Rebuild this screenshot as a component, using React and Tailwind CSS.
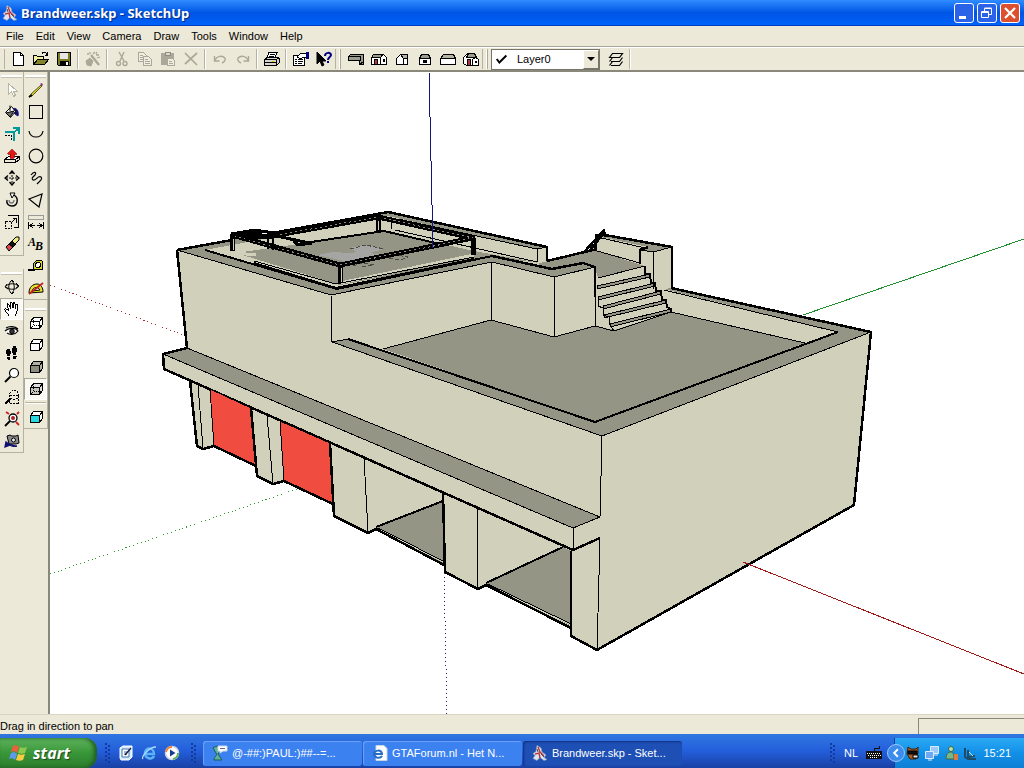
// src/App.jsx
const Ico = ({ children, className = 'w-4 h-4', smooth }) => (
  <svg
    viewBox="0 0 16 16"
    className={`shrink-0 ${className}`}
    fill="none"
    stroke="#000"
    shapeRendering={smooth ? 'auto' : 'crispEdges'}
    aria-hidden="true"
  >
    {children}
  </svg>
)

const SketchUpLogo = () => (
  <Ico smooth>
    <path d="M5 0.5l4 2.5 1 4 4 3-2 2.5 3 2-3 1-4-3-3 3-4-2 2-3-2-2 3-2z" fill="#dfe5ef" stroke="#8d9bb8" strokeWidth="0.7" />
    <path d="M6 2l2 5 4 4M3 9l4-1 1 5" stroke="#b5363b" strokeWidth="1.4" />
    <path d="M5 4l1 3M9 9l3 3" stroke="#44506e" />
  </Ico>
)

/* ---------- standard toolbar icons ---------- */
const NewIcon = () => (
  <Ico><path d="M3.5 1.5h7l3 3v10h-10z" fill="#fff" /><path d="M10.5 1.5v3h3" /></Ico>
)
const OpenIcon = () => (
  <Ico>
    <path d="M0.5 13.5v-9h3l1 1h6v3" fill="#f2f0a0" />
    <path d="M0.5 13.5l4-5h11l-4 5z" fill="#84842a" />
    <path d="M9 2.5c2-2 4-1 5 1M14.5 1v3h-3" />
  </Ico>
)
const SaveIcon = () => (
  <Ico>
    <path d="M1.5 1.5h13v13h-12l-1-1z" fill="#7d7d20" />
    <path d="M4 2h8v6H4z" fill="#e6e6e6" stroke="none" />
    <path d="M4 10h9v4H4z" fill="#000" stroke="none" />
    <path d="M10 11h2v3h-2z" fill="#fff" stroke="none" />
  </Ico>
)
const MagicIcon = () => (
  <Ico smooth>
    <g stroke="#aca899">
      <path d="M1 10l4-3 3 3-2 5-4-1z" fill="#aca899" />
      <path d="M6 4l8 10" strokeWidth="2.4" />
      <path d="M8 3l2-2M11 4h3M12 7l3-1M5 1v2M2 3h2M12 1l-1 2" strokeWidth="1.3" />
    </g>
  </Ico>
)
const CutIcon = () => (
  <Ico smooth>
    <g stroke="#aca899" strokeWidth="1.4">
      <path d="M5 1l5 9M10 1L6 10" />
      <circle cx="4.5" cy="12.5" r="2" />
      <circle cx="11" cy="12.5" r="2" />
    </g>
  </Ico>
)
const CopyIcon = () => (
  <Ico>
    <g stroke="#aca899" fill="#efece0">
      <path d="M1.5 1.5h5l3 3v6h-8z" /><path d="M3 4.5h3M3 6.5h4M3 8.5h4" />
      <path d="M6.5 5.5h5l3 3v6h-8z" /><path d="M8 8.5h3M8 10.5h5M8 12.5h5" />
    </g>
  </Ico>
)
const PasteIcon = () => (
  <Ico>
    <path d="M1.5 2.5h12v11h-12z" fill="#aca899" stroke="#aca899" />
    <path d="M5 1.5h5v3H5z" fill="#dcd8c8" stroke="#8f8c80" />
    <path d="M7.5 7.5h5l2 2v5h-7z" fill="#efece0" stroke="#aca899" />
    <path d="M9 10.5h3M9 12.5h4" stroke="#aca899" />
  </Ico>
)
const DeleteIcon = () => <Ico smooth><path d="M2 2l12 12M14 2L2 13" stroke="#aca899" strokeWidth="1.7" /></Ico>
const UndoIcon = () => (
  <Ico smooth><path d="M2.5 5v5h5M3 9c2-4 7-5 10-2 1 3-1 4-3 5" stroke="#aca899" strokeWidth="1.4" /></Ico>
)
const RedoIcon = () => (
  <Ico smooth><path d="M13.5 5v5h-5M13 9c-2-4-7-5-10-2-1 3 1 4 3 5" stroke="#aca899" strokeWidth="1.4" /></Ico>
)
const PrintIcon = () => (
  <Ico>
    <path d="M5 1.5h8l-2 5H3z" fill="#fff" /><path d="M6 3.5h5M5 5.5h5" />
    <path d="M0.5 8.5l3-2h10l2 1v4l-3 3h-12z" fill="#d8d6cc" />
    <path d="M0.5 8.5h12l3-2M12.5 8.5v6M1 11.5h11" />
    <path d="M8 10h2" stroke="#e0c800" />
  </Ico>
)
const PropsIcon = () => (
  <Ico>
    <path d="M0.5 4.5h11v10h-11z" fill="#fff" />
    <path d="M2 8.5h2M5 8.5h5M2 10.5h2M5 10.5h5M2 12.5h2M5 12.5h4" />
    <path d="M4 6l4-4 5 1v4l-3-1-2 2-2-1z" fill="#fff" /><path d="M13 1h2.5v6H13z" fill="#000080" stroke="#000080" />
  </Ico>
)
const HelpIcon = () => (
  <Ico smooth>
    <path d="M1 1v12l3-3 2 5 2-1-2-4h4z" fill="#000" />
    <path d="M9 5c0-4 6-4 6-1 0 2-3 2-3 5M12 10v2" stroke="#000080" strokeWidth="2" />
  </Ico>
)

/* ---------- view icons ---------- */
const IsoIcon = () => (
  <Ico>
    <path d="M0.5 5.5l2-2h13v10h-4v-4h-11z" fill="#9c9c8c" />
    <path d="M0.5 5.5h12v4M11.5 13.5l4-3" />
  </Ico>
)
const TopIcon = () => (
  <Ico>
    <path d="M0.5 6.5l2-3h10l3 3v7h-15z" fill="#fff" />
    <path d="M0.5 6.5l2-3h9l-2 3z" fill="#9c9c8c" />
    <path d="M9.5 13.5v-7l3-3 3 3v7" />
    <path d="M3.5 8.5h3v5h-3z" fill="#b5363b" /><path d="M12 8h2v3h-2z" fill="#000" stroke="none" />
  </Ico>
)
const FrontIcon = () => (
  <Ico>
    <path d="M2.5 13.5v-6l4-4h7v10z" fill="#fff" /><path d="M6.5 3.5l3 4h4v-4z" fill="#b4b4a4" /><path d="M9.5 7.5v6" />
  </Ico>
)
const RightIcon = () => (
  <Ico>
    <path d="M2.5 7.5l2-4h7l2 4z" fill="#9c9c8c" /><path d="M2.5 7.5h11v6h-11z" fill="#fff" />
    <path d="M6 9h4v3H6z" fill="#000" stroke="none" />
  </Ico>
)
const BackIcon = () => (
  <Ico>
    <path d="M0.5 7.5l3-4h10l2 4z" fill="#b4b4a4" /><path d="M0.5 7.5h15v6h-15z" fill="#fff" />
  </Ico>
)
const LeftIcon = () => (
  <Ico>
    <path d="M0.5 12.5v-6l4-4h7l3 5v7h-11z" fill="#fff" /><path d="M3.5 6.5l2-4h6l2 4z" fill="#9c9c8c" />
    <path d="M4.5 8.5h3v6h-3z" fill="#b5363b" /><path d="M9.5 14.5v-6l3-2 3 2v6z" fill="#fff" />
    <path d="M12 10h2v2h-2z" fill="#000" stroke="none" />
  </Ico>
)
const LayersIcon = () => (
  <Ico smooth>
    <path d="M1.5 6.5l3-4h10l-3 4zM3 10.5h8.5l3-4M1.500 10.500l3-4M3 14.500h8.500l3-4M1.500 14.500l3-4" strokeWidth="1.2" />
  </Ico>
)

/* ---------- drawing tool icons ---------- */
const SelectIcon = () => (
  <Ico><path d="M4.5 1.5v11l3-3 2 5 2-1-2-4h4z" fill="#fff" stroke="#b8b5a5" /></Ico>
)
const PaintIcon = () => (
  <Ico smooth>
    <path d="M8 5c4-2 7 1 6 7l-3-2z" fill="#101070" stroke="#101070" />
    <path d="M1.5 8.5l6-6 4 5-5 6z" fill="#fff" /><path d="M2 9l8-2-4 6z" fill="#707070" /><path d="M6 7V1.5" />
  </Ico>
)
const PushIcon = () => (
  <Ico>
    <path d="M9 2h6v6M14 3l-5 4M1 6h8M10 7v8" stroke="#009a9a" strokeWidth="2" />
    <path d="M1 9.5h6M7.5 9v6" strokeDasharray="2 1" />
  </Ico>
)
const PullIcon = () => (
  <Ico>
    <path d="M0.5 11.5l4-3h11l-4 3z" fill="#fff" /><path d="M0.5 11.5v3h11l4-3V8.5M11.5 11.5v3" />
    <path d="M8 1l4.5 5H10v4H6V6H3.5z" fill="#e01818" stroke="#900" strokeWidth="0.7" />
  </Ico>
)
const MoveIcon = () => (
  <Ico smooth>
    <path d="M8 2v12M2 8h12" strokeDasharray="2 1" />
    <path d="M5.5 4L8 1l2.5 3M5.5 12L8 15l2.5-3M4 5.5L1 8l3 2.5M12 5.5L15 8l-3 2.5" strokeWidth="1.4" />
  </Ico>
)
const RotateIcon = () => (
  <Ico smooth>
    <path d="M3 8c-1 4 2 6 5 6 6 0 7-8 2-11" strokeWidth="1.4" />
    <path d="M5 8c0 4 5 4 5 0" stroke="#777" strokeWidth="1.3" /><path d="M11 1H6l2 5z" fill="#fff" />
  </Ico>
)
const ScaleIcon = () => (
  <Ico>
    <path d="M4 1.5h10.5v12H10" /><path d="M1.5 7.5h6v7h-6z" strokeDasharray="2 1" />
    <path d="M7 9l5-5M8.5 4.5H12v4" />
  </Ico>
)
const EraserIcon = () => (
  <Ico smooth>
    <path d="M2 11l3-3 4 3-4 4z" fill="#d84848" /><path d="M5 8l3-3 4 3-3 3z" fill="#111" />
    <path d="M8 5l4-4h3v3l-4 4z" fill="#f0e880" />
  </Ico>
)
const PencilIcon = () => (
  <Ico smooth>
    <path d="M1 15l2-3 10-9 1 1-10 10z" fill="#d6cf30" stroke="#4c4810" strokeWidth="0.9" />
    <path d="M12 2l2-1 1 2-1 1z" fill="#8d2d8d" stroke="none" /><path d="M1 15l3-2" strokeWidth="1.6" />
  </Ico>
)
const RectIcon = () => <Ico><path d="M1.5 1.5h13v13h-13z" /></Ico>
const ArcIcon = () => <Ico smooth><path d="M1 5c1 8 13 8 14 0" strokeWidth="1.2" /></Ico>
const CircleIcon = () => <Ico smooth><circle cx="8" cy="8" r="6.8" strokeWidth="1.2" /></Ico>
const FreehandIcon = () => (
  <Ico smooth><path d="M3 5c3-4 6-3 4 0-2 2-4 3-2 5 3 1 5-5 8-3 2 2-1 4-4 7" strokeWidth="1.2" /></Ico>
)
const PolygonIcon = () => <Ico smooth><path d="M1 7l13-5-3 13z" strokeWidth="1.2" /></Ico>
const DimensionIcon = () => (
  <Ico>
    <path d="M0.5 1.5h15v4h-15z" stroke="#999" />
    <path d="M0.5 8v7M15.5 8v7M2 11.5h5M9 11.5h5M5 9l-3 2.5L5 14M11 9l3 2.5-3 2.5" />
  </Ico>
)
const TextIcon = () => (
  <span className="flex font-['Liberation_Serif',serif] italic font-bold text-xs leading-4">
    <span className="pb-1">A</span>
    <span className="pt-1 -ml-px">B</span>
  </span>
)
const TapeIcon = () => (
  <Ico>
    <path d="M5.5 11.5v-6l3-3h5l1 1v8z" fill="#d9d22c" /><circle cx="10" cy="7" r="2.5" fill="#fff" />
    <path d="M0 12h7" strokeWidth="2" />
  </Ico>
)
const ProtractorIcon = () => (
  <Ico smooth>
    <path d="M1 13c0-6 4-9 8-9 4 0 6 4 6 8z" fill="#e8e02c" /><path d="M4 11c1-4 6-5 8-1z" fill="#fff" />
    <path d="M1 14L15 3" stroke="#c02020" strokeWidth="1.8" />
  </Ico>
)

/* ---------- camera icons ---------- */
const OrbitIcon = () => (
  <Ico smooth>
    <path d="M8 2c3 3 3 9 0 12M7 2c-3 3-3 9 0 12M2 7c3-3 10-3 12 0 1 3-8 5-12 1" />
    <path d="M6 3l2-2 2 2M6 13l2 2 2-2M3 5L1 8l3 2M12 4l3 3-3 2" />
  </Ico>
)
const PanIcon = () => (
  <Ico>
    <path d="M5 15c-1-3-5-5-4-7 1-1 3 1 4 2L3 4c0-2 2-1 2 0l2 4-1-6c1-2 2 0 2 0l1 5V2c1-1 2 0 2 1v5l1-4c1-1 2 0 2 1-1 5-1 7-3 10" fill="#fff" />
  </Ico>
)
const LookIcon = () => (
  <Ico smooth>
    <path d="M2 5c3-2 9-2 12 1M1 8c3-3 10-4 13 0-3 4-8 4-11 2" fill="#fff" strokeWidth="1.2" />
    <circle cx="8" cy="8.5" r="2.3" fill="#333" />
  </Ico>
)
const WalkIcon = () => (
  <Ico>
    <path d="M9 1h3l1 3-1 6H9L8 5zM9 11h4l-1 3h-3zM3 4h3l1 3-1 4H3L2 7zM3 12h3v3H4z" fill="#000" stroke="none" />
  </Ico>
)
const ZoomIcon = () => (
  <Ico smooth><circle cx="10" cy="6" r="4.5" fill="#fff" strokeWidth="1.2" /><path d="M6.5 9.5L1 15" strokeWidth="2" /></Ico>
)
const ZoomWindowIcon = () => (
  <Ico>
    <path d="M5.5 6.5h9v8h-9z" strokeDasharray="2 1" /><circle cx="10" cy="6" r="4.5" strokeDasharray="2 1" />
    <path d="M6 10l-5 5" strokeWidth="2" />
  </Ico>
)
const ZoomExtentsIcon = () => (
  <Ico smooth>
    <circle cx="9" cy="7" r="4" fill="#fff" strokeWidth="1.3" /><circle cx="9" cy="7" r="2" fill="#b02020" stroke="none" />
    <path d="M6 10l-5 5" strokeWidth="1.8" />
    <path d="M2 1l3 2M15 1l-2 2M15 14l-3-3" stroke="#d02020" strokeWidth="1.8" />
  </Ico>
)
const PreviousIcon = () => (
  <Ico smooth>
    <path d="M3 3l3-1 2 1h4l2-1 1 8-3 1H5z" fill="#888" /><circle cx="9.5" cy="7" r="2" fill="#eee" />
    <path d="M13 13c-4 1-7 0-9-3M1 14l1-5 4 3z" fill="#101070" stroke="#101070" strokeWidth="1.3" />
  </Ico>
)

/* ---------- face styles ---------- */
const Box = ({ top = '#fff', front = '#fff', dash }) => (
  <Ico>
    <path d="M2.5 6.5l3-4h9l-3 4z" fill={top} />
    <path d="M11.5 6.5l3-4v7l-3 4z" fill={top} />
    <path d="M2.5 6.5h9v7h-9z" fill={front} />
    {dash && <path d="M5.5 3v7M5.5 10.5h8M5 11l-2 2" strokeDasharray="1 1" />}
  </Ico>
)

/* ---------- small pieces ---------- */
const ToolButton = ({ label, icon: Icon, active, disabled }) => (
  <button
    aria-label={label}
    disabled={disabled}
    className={`flex items-center justify-center w-[23px] h-[22px] shrink-0 ${
      active ? 'bg-[#f9f8f3] border border-t-[#aca899] border-l-[#aca899] border-b-white border-r-white' : ''
    }`}
  >
    <Icon />
  </button>
)

const Separator = () => (
  <div className="w-[6px] h-5 flex justify-center shrink-0">
    <div className="w-[2px] bg-[#b5b2a2] border-r border-white" />
  </div>
)

const Grip = () => (
  <div className="w-[9px] h-5 flex justify-between pr-[3px] shrink-0">
    <div className="w-px bg-[#b5b2a2]" />
    <div className="w-[2px] bg-white border-r border-[#aca899]" />
  </div>
)

const ToolColumn = ({ groups }) => (
  <div className="w-6 border-r border-[#b5b2a2] bg-[#ece9d8] flex flex-col gap-[5px]">
    {groups.map((group) => (
      <div key={group.name} role="toolbar" aria-label={group.name} className="border-b border-[#b5b2a2]">
        <div className="h-[7px] pt-[3px] px-px">
          <div className="h-[3px] bg-white border-b border-[#c5c2b2]" />
        </div>
        {group.tools.map((tool) => (
          <div key={tool.label}>
            {tool.split && <div className="h-[2px] my-[2px] mx-px bg-[#b5b2a2] border-b border-white" />}
            <ToolButton {...tool} />
          </div>
        ))}
      </div>
    ))}
  </div>
)

const menus = ['File', 'Edit', 'View', 'Camera', 'Draw', 'Tools', 'Window', 'Help']

const standardTools = [
  [
    { label: 'New', icon: NewIcon },
    { label: 'Open', icon: OpenIcon },
    { label: 'Save', icon: SaveIcon },
  ],
  [{ label: 'Make component', icon: MagicIcon, disabled: true }],
  [
    { label: 'Cut', icon: CutIcon, disabled: true },
    { label: 'Copy', icon: CopyIcon, disabled: true },
    { label: 'Paste', icon: PasteIcon, disabled: true },
    { label: 'Delete', icon: DeleteIcon, disabled: true },
  ],
  [
    { label: 'Undo', icon: UndoIcon, disabled: true },
    { label: 'Redo', icon: RedoIcon, disabled: true },
  ],
  [{ label: 'Print', icon: PrintIcon }],
  [
    { label: 'Properties', icon: PropsIcon },
    { label: 'Context help', icon: HelpIcon },
  ],
]

const viewTools = [
  { label: 'Iso', icon: IsoIcon },
  { label: 'Top', icon: TopIcon },
  { label: 'Front', icon: FrontIcon },
  { label: 'Right', icon: RightIcon },
  { label: 'Back', icon: BackIcon },
  { label: 'Left', icon: LeftIcon },
]

const editTools = [
  { label: 'Select', icon: SelectIcon, disabled: true },
  { label: 'Paint bucket', icon: PaintIcon },
  { label: 'Offset', icon: PushIcon },
  { label: 'Push/Pull', icon: PullIcon },
  { label: 'Move', icon: MoveIcon },
  { label: 'Rotate', icon: RotateIcon },
  { label: 'Scale', icon: ScaleIcon },
  { label: 'Eraser', icon: EraserIcon },
]

const cameraTools = [
  { label: 'Orbit', icon: OrbitIcon },
  { label: 'Pan', icon: PanIcon, active: true },
  { label: 'Look around', icon: LookIcon },
  { label: 'Walk', icon: WalkIcon },
  { label: 'Zoom', icon: ZoomIcon },
  { label: 'Zoom window', icon: ZoomWindowIcon },
  { label: 'Zoom extents', icon: ZoomExtentsIcon },
  { label: 'Previous view', icon: PreviousIcon },
]

const drawTools = [
  { label: 'Line', icon: PencilIcon },
  { label: 'Rectangle', icon: RectIcon },
  { label: 'Arc', icon: ArcIcon },
  { label: 'Circle', icon: CircleIcon },
  { label: 'Freehand', icon: FreehandIcon },
  { label: 'Polygon', icon: PolygonIcon },
  { label: 'Dimension', icon: DimensionIcon },
  { label: 'Text', icon: TextIcon },
  { label: 'Tape measure', icon: TapeIcon },
  { label: 'Protractor', icon: ProtractorIcon },
]

const styleTools = [
  { label: 'Wireframe', icon: () => <Box dash /> },
  { label: 'Hidden line', icon: () => <Box /> },
  { label: 'Shaded', icon: () => <Box top="#b0b0a4" front="#8c8c80" /> },
  { label: 'Shaded with textures', icon: () => <Box top="#ddd" front="#c4c4bc" dash />, active: true },
  { label: 'X-ray', icon: () => <Box top="#fff" front="#28d8e0" />, split: true },
]

/* ---------- model ---------- */
const LIGHT = '#d1d1bb'
const DARK = '#959585'

const STEPS = [
  [597, 286, 650, 274],
  [598, 297, 655, 283],
  [603, 306, 661, 291],
  [604, 315, 666, 300],
  [610, 324, 671, 309],
]

const Model = () => (
  <svg
    viewBox="50 72 974 642"
    className="block w-full h-full"
    fill="none"
    stroke="#000"
    strokeWidth="1"
    strokeLinejoin="round"
    shapeRendering="crispEdges"
    role="img"
    aria-label="3D model of the fire station"
  >
    {/* axes behind the model */}
    <path d="M50 285L186 336" stroke="#a03030" strokeDasharray="1 3" />
    <path d="M50 574L297 489" stroke="#309a30" strokeDasharray="1 3" />
    <path d="M444 573L447 714" stroke="#202070" strokeDasharray="1 3" />
    <path d="M803 315L1024 239" stroke="#1f8f2f" />

    {/* overall body */}
    <path
      d="M177 250L388 212L547 247V261L595 248V235L672 247L671 288L871 332L854 505L597 650L571 636V628L486 585L478 589L445 572L444 565L376 529L368 533L334 516L333 504L284 481L273 484L257 476L256 466L214 446L203 449L197 446L190 381L164 369L162 354L187 348Z"
      fill={LIGHT}
      stroke="none"
    />

    {/* rear roof */}
    <path d="M177 250L388 212L547 247L537 249L388 216L205 250L337 289L492 256L552 269L583 263L595 267L554 277L492 262L331 295Z" fill={DARK} stroke="none" />
    <path d="M236 253L298 244L384 231L474 251L540 263L492 257L340 285Z" fill={DARK} stroke="none" />
    <path d="M318 255L332 252L350 253L357 252L349 248L366 245L384 249L370 253L385 256L348 262Z" fill="#a5a5a3" stroke="none" />
    <path d="M350 249L366 245L384 249M388 258L396 255L408 257L400 260L388 258M353 266L362 263L374 265L362 267" stroke="#4a4a42" strokeDasharray="4 2" />
    <path d="M391 217V229M395 230L537 262M537 249V262M398 219L537 249L547 247" />
    <path d="M205 250L337 289L492 256" strokeWidth="2" />
    <path d="M177 250L232 240M272 233L388 212L547 247V261" strokeWidth="2.5" />
    <path d="M298 244L384 231L440 244" strokeWidth="2" />
    <path d="M236 253L256 255M340 283L474 255" stroke={LIGHT} strokeWidth="3" />
    <path d="M256 262L336 285" stroke={LIGHT} strokeWidth="2" />
    <path d="M254 261L336 284L474 257" />
    <path d="M254 263L336 288L474 259" strokeWidth="2" />

    {/* roof railing */}
    <path d="M232 235L340 265L473 238L378 217L272 236L232 236" strokeWidth="5" />
    <path d="M234 236L340 265L473 238L378 217L272 236" stroke="#8c8c7e" strokeDasharray="2 3" />
    <path d="M231 234L255 230L274 233L270 238M240 235L262 232M276 236L310 243M294 241L298 245L312 243" strokeWidth="3" />
    <path d="M232 234V251M340 265V283M378 217V231M473 238V255" strokeWidth="5" />
    <path d="M233 239V250M341 268V282M378 221V230" stroke={LIGHT} />
    <path d="M256 231V242M268 232V249M273 235V250" strokeWidth="1.5" />

    {/* walls of the rear block */}
    <path d="M177 250L331 295L492 262L554 277L595 267" />
    <path d="M331 295L332 342M491 262V320M554 277V337" />
    <path d="M177 250L187 348" strokeWidth="2.5" />

    {/* terrace floor */}
    <path d="M383 349L491 320L554 337L595 326L614 330L671 312L805 343L595 422Z" fill={DARK} stroke="none" />
    <path d="M383 349L491 320L554 337L595 326M671 312L805 343" />
    <path d="M664 289L671 288L871 332L838 332Z" fill={DARK} stroke="none" />
    <path d="M664 290L838 332" />
    <path d="M595 422L838 332L871 332L602 436Z" fill={DARK} stroke="none" />
    <path d="M332 342L348 339L595 422L602 436Z" fill={DARK} stroke="none" />
    <path d="M348 339L332 342L602 436L871 332" />
    <path d="M348 339L595 422L838 332" strokeWidth="2" />
    <path d="M671 288L871 332L854 505L597 650" strokeWidth="2.5" />

    {/* platform and stairs */}
    <path d="M537 264L580 252L597 251L645 266L598 278L595 267L583 263L552 269Z" fill={DARK} stroke="none" />
    <path d="M492 256L552 269L583 263L595 267V297" strokeWidth="2.5" />
    <path d="M547 261L597 249" strokeWidth="2.5" />
    <path d="M598 278L645 266L650 274L655 283L661 291L666 300L671 310L671 312L614 330L604 315L598 297Z" fill={LIGHT} stroke="none" />
    {STEPS.map(([x1, y1, x2, y2]) => (
      <path key={y1} d={`M${x1} ${y1}L${x2} ${y2}L${x2} ${y2 + 3}L${x1} ${y1 + 3}Z`} fill={DARK} />
    ))}
    <path d="M595 297V326L614 331L671 312M598 278L645 266M598 297V306L603 308V315L609 317L610 325L614 331" />
    <path d="M645 266V274H650L651 283H655L656 291H661L662 300H666L667 307L671 309V312" strokeWidth="2" />

    {/* parapet next to the stairs */}
    <path d="M596 236L605 235L672 247L653 252L640 250L648 247Z" fill={DARK} stroke="none" />
    <path d="M597 237L645 248M653 252L672 247M640 250L653 252M597 251L640 263M653 252V289" />
    <path d="M596 251V235L605 235L672 247V288M648 247L640 250V264" strokeWidth="2.5" />
    <path d="M585 251L604 230L605 237M590 250L603 234M595 249V242" strokeWidth="2.5" />

    {/* ledge */}
    <path d="M163 354L187 348L600 517L573 528Z" fill={DARK} />
    <path d="M187 348L163 354L164 369L573 550L600 538" strokeWidth="2.5" />
    <path d="M573 528V550M602 436L600 517M600 538L597 650" />

    {/* garage doors */}
    <path d="M210 389L251 408L256 466L214 446Z" fill="#f04c40" />
    <path d="M280 421L330 443L333 504L284 481Z" fill="#f04c40" />
    <path d="M376 528L443 501V564Z" fill={DARK} stroke="none" />
    <path d="M486 584L563 547L571 551V626Z" fill={DARK} stroke="none" />
    <path d="M378 528L443 561M488 584L571 624" />
    <path d="M378 529L443 562M488 585L571 625" stroke={LIGHT} />
    <path d="M376 527L443 501M486 583L563 547" strokeWidth="2" />

    {/* pillars */}
    <path d="M198 385L203 448M267 415L273 484M364 458L368 531M477 508L478 588" />
    <path
      d="M190 381L197 446L203 449L214 446L256 466M251 408L257 476L273 484L284 481L333 504M330 443L334 516L368 533L376 529L444 565M443 493L445 572L478 589L486 585L571 628M571 551V636L597 650"
      strokeWidth="2.5"
    />

    {/* axes in front of the model */}
    <path d="M429 72L433 248" stroke="#14147c" />
    <path d="M743 562L1024 674" stroke="#a01818" />
  </svg>
)

/* ---------- taskbar ---------- */
const TaskGrip = () => (
  <svg viewBox="0 0 6 22" className="w-[6px] h-[22px] shrink-0" fill="#103a9c" aria-hidden="true">
    {[1, 5, 9, 13, 17].map((y) => (
      <g key={y}>
        <rect x="0" y={y} width="2" height="2" />
        <rect x="3" y={y + 2} width="2" height="2" />
      </g>
    ))}
  </svg>
)

const IeIcon = () => (
  <Ico smooth>
    <path d="M13 11c-2 4-9 3-9-3s9-6 9 1H5" stroke="#58b4f4" strokeWidth="2.5" />
    <path d="M2 14C0 12 8 2 15 2" stroke="#a8dcfc" strokeWidth="1.3" />
  </Ico>
)
const DesktopIcon = () => (
  <Ico smooth>
    <path d="M2 3l3-2h9v11l-3 3H3l-1-2z" fill="#d9ebfa" stroke="#fff" />
    <path d="M4 4h7v8H4z" fill="#fff" stroke="#3a78b8" /><path d="M6 7h4M6 9h3" stroke="#3a78b8" />
    <path d="M7 10l6-7" stroke="#224" strokeWidth="1.5" />
  </Ico>
)
const MediaIcon = () => (
  <Ico smooth>
    <circle cx="8" cy="8" r="6.5" fill="#fff" stroke="#d0d8e4" strokeWidth="1.5" />
    <path d="M2 7a6 6 0 0 1 6-5" stroke="#f08030" strokeWidth="2" /><path d="M14 8a6 6 0 0 1-5 6" stroke="#58b048" strokeWidth="2" />
    <path d="M6 4.5L11.5 8 6 11.5z" fill="#183c90" stroke="none" />
  </Ico>
)
const ChatIcon = () => (
  <Ico smooth>
    <path d="M1 3c4-3 7-2 8 2l-3 4 4 6H2c0-4 4-4 2-7z" fill="#5faf9c" stroke="#185c58" />
    <path d="M6 1h9v5h-4l-3 2V6H6z" fill="#fff" stroke="#c8d8e8" /><path d="M8 3.5h5" stroke="#668" />
  </Ico>
)
const PageIcon = () => (
  <Ico smooth>
    <path d="M4 0.5h8l3 3v12H4z" fill="#fff" stroke="#c8d4e0" />
    <path d="M10 11c-2 3-8 2-8-2s8-5 8 0H3" stroke="#246cc4" strokeWidth="2" />
  </Ico>
)

const tasks = [
  { label: '@-##:)PAUL:)##--=...', icon: ChatIcon },
  { label: 'GTAForum.nl - Het N...', icon: PageIcon },
  { label: 'Brandweer.skp - Sket...', icon: SketchUpLogo, active: true },
]

const Taskbar = () => (
  <footer className="h-[34px] flex items-end text-white bg-linear-to-b from-[#3076e0] via-[#245edb] to-[#1941a5]">
    <div className="flex-1 h-[30px] flex items-center min-w-0">
      <button className="w-[97px] h-full flex items-center gap-1 pl-[9px] rounded-r-xl bg-linear-to-b from-[#5fb45c] via-[#389638] to-[#2d7e2d] shadow-[inset_-3px_0_4px_#1f5c22]">
        <svg viewBox="0 0 20 20" className="w-5 h-5" aria-hidden="true">
          <path d="M4 3c2-1 4-1 6 1L8 10C6 8 4 8 2 9z" fill="#e8603c" />
          <path d="M11 4c2 1 4 1 7 0l-2 6c-2 1-5 1-7 0z" fill="#8cc84c" />
          <path d="M2 10c2-1 4-1 6 1l-2 6c-2-2-4-2-6-1z" fill="#6098f0" />
          <path d="M9 11c2 1 4 1 7 0l-2 6c-2 1-5 1-7 0z" fill="#f8cc40" />
        </svg>
        <span className="font-['Open_Sans',sans-serif] font-bold italic text-base leading-5 [text-shadow:1px_1px_1px_#1c4a1c]">start</span>
      </button>
      <div className="flex items-center pl-2">
        <TaskGrip />
        <div className="flex gap-[7px] px-[7px]">
          <button aria-label="Show desktop"><DesktopIcon /></button>
          <button aria-label="Internet Explorer"><IeIcon /></button>
          <button aria-label="Media player"><MediaIcon /></button>
        </div>
        <div className="pl-1 pr-[6px]"><TaskGrip /></div>
      </div>
      <div className="flex gap-px min-w-0">
        {tasks.map(({ label, icon: Icon, active }) => (
          <button
            key={label}
            className={`w-[159px] h-[25px] flex items-center gap-1 pl-[9px] rounded-[3px] whitespace-nowrap ${
              active ? 'bg-[#1e4fb4] shadow-[inset_1px_1px_2px_#103080]' : 'bg-[#3c81f0] shadow-[inset_1px_1px_1px_#6ba2f8]'
            }`}
          >
            <Icon />
            {label}
          </button>
        ))}
      </div>
      <div className="ml-auto flex items-center pr-3">
        <TaskGrip />
        <span className="pl-2">NL</span>
        <svg viewBox="0 0 16 16" className="w-4 h-4 ml-2" shapeRendering="crispEdges" aria-hidden="true">
          <path d="M0 6h16v8H0z" fill="#111" />
          <path d="M1 8.5h14M2 10.5h13M4 12.5h8" stroke="#fff" strokeDasharray="1 1" />
          <path d="M8.5 6V3.5h5V1" stroke="#111" fill="none" />
        </svg>
      </div>
    </div>
    <div className="w-[130px] h-[30px] flex items-center border-l border-[#0f3f9c] bg-linear-to-b from-[#2aa9f4] via-[#1290e8] to-[#0e7fd4]">
      <button aria-label="Show hidden icons" className="-ml-2 w-[18px] h-[18px] rounded-full bg-[#3c8cec] border border-[#9cc8fa] flex items-center justify-center">
        <svg viewBox="0 0 8 8" className="w-[10px] h-[10px]" fill="none" stroke="#fff" strokeWidth="1.5" aria-hidden="true"><path d="M5.5 1L2.5 4l3 3" /></svg>
      </button>
      <div className="flex gap-[3px]">
        <Ico smooth>
          <path d="M3 2l3 2h5l2-2v6l-2 6H5L2 9z" fill="#a85c28" stroke="#3c200c" /><path d="M3 6h9v3H3z" fill="#111" />
          <path d="M8 10h5v3H8z" fill="#f4ead8" />
        </Ico>
        <Ico smooth>
          <path d="M6.5 1.5h8v7h-8z" fill="#9cc8fa" stroke="#dcecff" /><path d="M1.5 6.5h8v7h-8z" fill="#6ca8f4" stroke="#dcecff" />
          <path d="M4 15h4M10 10h4" stroke="#dcecff" />
        </Ico>
        <Ico smooth>
          <circle cx="8" cy="4" r="2.5" fill="#bce0b0" stroke="#406848" /><path d="M3 14c0-5 2-7 5-7 2 0 3 2 3 7z" fill="#78b888" stroke="#406848" />
          <path d="M11 9h4v6h-4z" fill="#e07840" stroke="none" />
        </Ico>
        <Ico smooth>
          <path d="M3 3v9l3 2h8M6 5v7l7-1" stroke="#1c4c68" strokeWidth="2" /><path d="M7 7l4 4" stroke="#d0e8c0" />
        </Ico>
      </div>
      <time className="ml-auto pr-[13px]">15:21</time>
    </div>
  </footer>
)

const winButton = 'w-5 h-5 rounded-[3px] border border-white flex items-center justify-center'

const App = () => (
  <div className="min-h-screen flex flex-col bg-[#ece9d8] text-black font-['Liberation_Sans',Arial,sans-serif] text-[11px] leading-4 overflow-hidden">
    {/* Title bar */}
    <header className="h-[26px] flex items-center pl-[2px] pr-1 bg-linear-to-b from-[#2f8cff] via-[#0055e5] to-[#0062fa] border-b border-[#0040c0]">
      <SketchUpLogo />
      <h1 className="pl-[3px] flex-1 text-white font-['Noto_Sans',sans-serif] font-bold text-[13px] [text-shadow:1px_1px_1px_#0a2a80]">Brandweer.skp - SketchUp</h1>
      <div className="flex gap-[3px]">
        <button aria-label="Minimize" className={`${winButton} bg-[#2a62e8]`}>
          <svg viewBox="0 0 20 20" className="w-5 h-5 shrink-0" aria-hidden="true"><path d="M5 13h7v3H5z" fill="#fff" /></svg>
        </button>
        <button aria-label="Restore" className={`${winButton} bg-[#2a62e8]`}>
          <svg viewBox="0 0 20 20" className="w-5 h-5 shrink-0" fill="none" stroke="#fff" aria-hidden="true">
            <path d="M7.5 8V5.5h7v6H12M7.5 5h7M4.5 8.5h7v6h-7zM4.5 9.5h7" />
          </svg>
        </button>
        <button aria-label="Close" className={`${winButton} bg-[#dc5030]`}>
          <svg viewBox="0 0 20 20" className="w-5 h-5 shrink-0" stroke="#fff" strokeWidth="2.2" aria-hidden="true"><path d="M5 5l10 10M15 5L5 15" /></svg>
        </button>
      </div>
    </header>

    {/* Menu bar */}
    <nav className="h-[21px] flex items-center border-b border-[#aca899]">
      {menus.map((item) => (
        <button key={item} className="px-[6px]">{item}</button>
      ))}
    </nav>

    {/* Toolbars */}
    <div className="h-[25px] flex items-center pl-1 border-t border-t-white border-b-2 border-b-[#8a887a]">
      <div className="w-[2px] h-5 border-l border-[#b5b2a2]" />
      {standardTools.map((group, i) => (
        <div key={group[0].label} className="flex items-center">
          {i > 0 && <Separator />}
          {group.map((tool) => <ToolButton key={tool.label} {...tool} />)}
        </div>
      ))}
      <Grip />
      {viewTools.map((tool) => <ToolButton key={tool.label} {...tool} />)}
      <Grip />
      <div className="w-[109px] h-[21px] flex items-center bg-white border border-[#77756a] pl-[3px]">
        <Ico smooth className="w-[14px] h-[14px]"><path d="M2 8l3 4 8-8" strokeWidth="2.2" /></Ico>
        <select aria-label="Layer" className="flex-1 min-w-0 appearance-none bg-transparent pl-2 outline-none">
          <option>Layer0</option>
        </select>
        <div className="w-4 h-full bg-[#ece9d8] border border-l-white border-t-white border-r-[#77756a] border-b-[#77756a] flex items-center justify-center pointer-events-none">
          <svg viewBox="0 0 8 4" className="w-2 h-1" aria-hidden="true"><path d="M0 0h8L4 4z" /></svg>
        </div>
      </div>
      <div className="pl-1 flex items-center">
        <ToolButton label="Layers" icon={LayersIcon} />
        <Separator />
      </div>
    </div>

    {/* Tool palettes and drawing area */}
    <main className="flex-1 flex min-h-0">
      <div className="flex shrink-0 items-start border-r-2 border-[#8a887a]">
        <div className="flex flex-col">
          <ToolColumn groups={[{ name: 'Edit', tools: editTools }]} />
          <div className="h-[13px]" />
          <ToolColumn groups={[{ name: 'Camera', tools: cameraTools }]} />
        </div>
        <ToolColumn
          groups={[
            { name: 'Drawing', tools: drawTools },
            { name: 'Face style', tools: styleTools },
          ]}
        />
      </div>
      <div className="flex-1 min-w-0 bg-white">
        <Model />
      </div>
    </main>

    {/* Status bar */}
    <div className="h-5 flex items-end justify-between border-t border-[#d8d5c4]">
      <p>Drag in direction to pan</p>
      <div className="w-[106px] h-4 border-t border-l border-[#8a887a]" />
    </div>

    <Taskbar />
  </div>
)

export default App
